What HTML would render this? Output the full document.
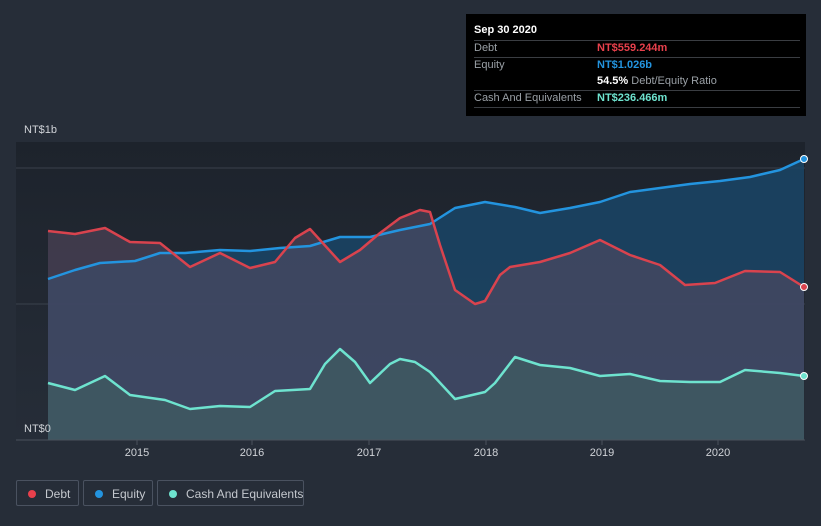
<!DOCTYPE html>
<html><head><style>
body{margin:0;width:821px;height:526px;background:#262d38;font-family:"Liberation Sans",sans-serif;overflow:hidden;position:relative}
.tt{position:absolute;left:466px;top:14px;width:340px;height:102px;background:#000;color:#9aa0a6;font-size:11px}
.tt div{position:absolute;white-space:nowrap}
.ln{position:absolute;left:8px;width:326px;height:1px;background:#3a3d42}
.lg{position:absolute;top:480px;height:26px;border:1px solid #4a5260;border-radius:2px;color:#c4c8ce;font-size:12px;line-height:26px;box-sizing:border-box;white-space:nowrap}
.lg i{position:absolute;left:11px;top:9px;width:8px;height:8px;border-radius:50%}
</style></head><body>
<svg width="821" height="526" style="position:absolute;left:0;top:0">
<defs>
<linearGradient id="bg" x1="0" y1="0" x2="0" y2="1"><stop offset="0" stop-color="#1d232c"/><stop offset="1" stop-color="#262d38"/></linearGradient>
</defs>
<rect x="16" y="142" width="789" height="298" fill="url(#bg)"/>
<line x1="16" y1="168" x2="805" y2="168" stroke="#3a414c"/>
<line x1="16" y1="304" x2="805" y2="304" stroke="#3a414c"/>
<g stroke-linejoin="round">
<path d="M48,279 L75,270 100,263 135,261 160,253 185,253 220,250 250,251 280,248 310,246 340,237 370,237 400,230 430,224 455,208 485,202 515,207 540,213 570,208 600,202 630,192 660,188 690,184 720,181 750,177 780,170 804,159 L804,440 48,440Z" fill="#1a4566" fill-opacity="0.85"/>
<path d="M48,231 L75,234 105,228 130,242 160,243 175,255 190,267 220,253 250,268 275,262 295,238 310,229 320,240 340,262 360,250 380,233 400,218 420,210 430,212 440,245 455,290 475,304 485,301 500,275 510,267 540,262 570,253 600,240 630,255 660,265 685,285 715,283 745,271 780,272 804,287 L804,440 48,440Z" fill="#5a4a63" fill-opacity="0.55"/>
<path d="M48,383 L75,390 105,376 130,395 165,400 190,409 220,406 250,407 275,391 310,389 325,364 340,349 355,362 370,383 390,364 400,359 415,362 430,372 455,399 485,392 495,383 515,357 540,365 570,368 600,376 630,374 660,381 690,382 720,382 745,370 780,373 804,376 L804,440 48,440Z" fill="#3e5a62" fill-opacity="0.8"/>
<path d="M48,279 L75,270 100,263 135,261 160,253 185,253 220,250 250,251 280,248 310,246 340,237 370,237 400,230 430,224 455,208 485,202 515,207 540,213 570,208 600,202 630,192 660,188 690,184 720,181 750,177 780,170 804,159" fill="none" stroke="#2394df" stroke-width="2.5"/>
<path d="M48,231 L75,234 105,228 130,242 160,243 175,255 190,267 220,253 250,268 275,262 295,238 310,229 320,240 340,262 360,250 380,233 400,218 420,210 430,212 440,245 455,290 475,304 485,301 500,275 510,267 540,262 570,253 600,240 630,255 660,265 685,285 715,283 745,271 780,272 804,287" fill="none" stroke="#d9434e" stroke-width="2.5"/>
<path d="M48,383 L75,390 105,376 130,395 165,400 190,409 220,406 250,407 275,391 310,389 325,364 340,349 355,362 370,383 390,364 400,359 415,362 430,372 455,399 485,392 495,383 515,357 540,365 570,368 600,376 630,374 660,381 690,382 720,382 745,370 780,373 804,376" fill="none" stroke="#6ee3cf" stroke-width="2.5"/>
</g>
<circle cx="804" cy="159" r="3.5" fill="#2394df" stroke="#fff"/>
<circle cx="804" cy="287" r="3.5" fill="#d9434e" stroke="#fff"/>
<circle cx="804" cy="376" r="3.5" fill="#6ee3cf" stroke="#fff"/>
<line x1="16" y1="440" x2="805" y2="440" stroke="#4a515c"/>
<g stroke="#4a515c"><line x1="137" y1="440" x2="137" y2="445"/><line x1="252" y1="440" x2="252" y2="445"/><line x1="369" y1="440" x2="369" y2="445"/><line x1="486" y1="440" x2="486" y2="445"/><line x1="602" y1="440" x2="602" y2="445"/><line x1="718" y1="440" x2="718" y2="445"/></g>
<g fill="#d0d3d8" font-size="11" text-anchor="middle" font-family="Liberation Sans"><text x="137" y="456">2015</text><text x="252" y="456">2016</text><text x="369" y="456">2017</text><text x="486" y="456">2018</text><text x="602" y="456">2019</text><text x="718" y="456">2020</text></g>
<g fill="#d0d3d8" font-size="11" font-family="Liberation Sans"><text x="24" y="133">NT$1b</text><text x="24" y="432">NT$0</text></g>
</svg>
<div class="tt">
<div style="left:8px;top:10px;color:#fff;font-weight:bold">Sep 30 2020</div>
<div class="ln" style="top:26px"></div>
<div style="left:8px;top:28px">Debt</div><div style="left:131px;top:28px;color:#e8404c;font-weight:bold">NT$559.244m</div>
<div class="ln" style="top:43px"></div>
<div style="left:8px;top:45px">Equity</div><div style="left:131px;top:45px;color:#2394df;font-weight:bold">NT$1.026b</div>
<div style="left:131px;top:61px"><b style="color:#fff">54.5%</b> Debt/Equity Ratio</div>
<div class="ln" style="top:76px"></div>
<div style="left:8px;top:78px">Cash And Equivalents</div><div style="left:131px;top:78px;color:#6ee3cf;font-weight:bold">NT$236.466m</div>
<div class="ln" style="top:93px"></div>
</div>
<div class="lg" style="left:16px;width:63px"><i style="background:#e8404c"></i><span style="position:absolute;left:28px">Debt</span></div>
<div class="lg" style="left:83px;width:70px"><i style="background:#2394df"></i><span style="position:absolute;left:28px">Equity</span></div>
<div class="lg" style="left:157px;width:147px"><i style="background:#6ee3cf"></i><span style="position:absolute;left:28px">Cash And Equivalents</span></div>
</body></html>
